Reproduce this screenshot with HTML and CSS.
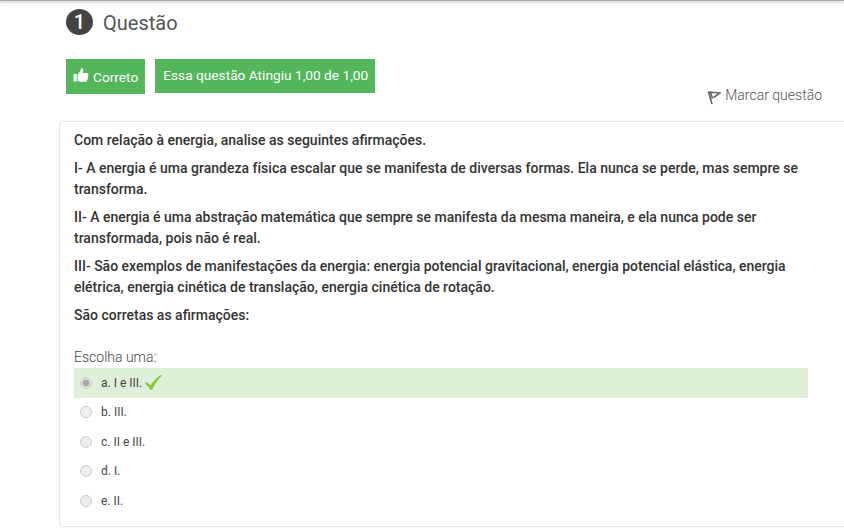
FILE: index.html
```html
<!DOCTYPE html>
<html>
    <head>
        <title>Questão</title>
        <meta charset="utf-8" />
        <link rel="stylesheet" href="styles.css">
    </head>
    <body>
        <div class="top-shadow"></div>
        <div class="question-head">
            <span class="number">1</span>
            <h2>Questão</h2>
        </div>
        <div class="status-row">
            <span class="tag tag-correct">
                <svg class="thumb" viewBox="0 0 16 16" width="16" height="16">
                    <path fill="#fff" d="M0.5 7h3.2v7.6H0.5zM4.600 7.200c1.500-1 2.600-2.600 3-4.400.2-1 .5-1.800 1.200-1.800 1 0 1.600 1 1.500 2.300-.1 1-.5 1.800-.8 2.600h4.400c1 0 1.600.6 1.600 1.400 0 .5-.2.900-.5 1.200.3.300.4.600.4 1 0 .6-.3 1-.8 1.300.2.300.2.600.2.900 0 .6-.4 1-.9 1.200.1.200.1.400.1.600 0 .8-.6 1.300-1.500 1.300H8c-1.300 0-2.300-.5-3.400-.9z"/>
                </svg>
                Correto
            </span>
            <span class="tag tag-grade">Essa questão Atingiu 1,00 de 1,00</span>
        </div>
        <div class="flag-row">
            <svg class="flag" viewBox="0 0 14 15" width="14" height="15">
                <path fill="none" stroke="#666" stroke-width="1.600" d="M1 2l12 1-6.500 4.500M1.500 2l3.500 12M3.500 2.500l2 6"/>
            </svg>
            <span>Marcar questão</span>
        </div>
        <div class="card">
            <p>Com relação à energia, analise as seguintes afirmações.</p>
            <p>I- A energia é uma grandeza física escalar que se manifesta de diversas formas. Ela nunca se perde, mas sempre se transforma.</p>
            <p>II- A energia é uma abstração matemática que sempre se manifesta da mesma maneira, e ela nunca pode ser transformada, pois não é real.</p>
            <p>III- São exemplos de manifestações da energia: energia potencial gravitacional, energia potencial elástica, energia elétrica, energia cinética de translação, energia cinética de rotação.</p>
            <p>São corretas as afirmações:</p>
            <div class="prompt">Escolha uma:</div>
            <div class="answers">
                <div class="answer answer-right">
                    <span class="radio radio-on"></span>
                    <span>a. I e III.</span>
                    <svg class="check" viewBox="0 0 17 15" width="17" height="15">
                        <path fill="#8cc63f" d="M0 8.500l2-1.500 3.500 3.500C8 6.500 11.500 3 15.500 0l1.500.5C12.500 5 9.500 9.500 7 15H5.500C4 12.500 2 10.500 0 8.500z"/>
                    </svg>
                </div>
                <div class="answer"><span class="radio"></span><span>b. III.</span></div>
                <div class="answer"><span class="radio"></span><span>c. II e III.</span></div>
                <div class="answer"><span class="radio"></span><span>d. I.</span></div>
                <div class="answer"><span class="radio"></span><span>e. II.</span></div>
            </div>
        </div>
    </body>
</html>
```

FILE: styles.css
```css
html,
body {
    margin: 0;
    padding: 0;
    height: 528px;
    overflow: hidden;
    background-color: #fff;
    font-family: Roboto, 'Liberation Sans', sans-serif;
    color: #333;
}

.top-shadow {
    height: 1px;
    background-color: #aaa;
    box-shadow: 0 1px 3px rgba(0, 0, 0, 0.4);
}

.question-head {
    display: flex;
    align-items: center;
    gap: 10px;
    height: 27px;
    margin: 7px 0 0 66px;
}

.question-head h2 {
    margin: 2px 0 0;
    font-size: 20px;
    font-weight: 400;
    color: #555;
}

.number {
    width: 27px;
    height: 26px;
    border-radius: 50%;
    background-color: #444;
    color: #fff;
    font-size: 20px;
    font-weight: 500;
    line-height: 26px;
    text-align: center;
}

.status-row {
    display: flex;
    align-items: flex-start;
    gap: 10px;
    margin: 24px 0 0 66px;
}

.tag {
    display: flex;
    align-items: center;
    background-color: #53b65a;
    color: #fff;
    font-size: 13.700px;
}

.tag-correct {
    height: 35px;
    padding: 0 7px;
    gap: 4px;
}

.tag-grade {
    height: 34px;
    padding: 0 7px 2px 8px;
    box-sizing: border-box;
}

.thumb {
    margin-bottom: 3px;
}

.flag-row {
    display: flex;
    align-items: center;
    justify-content: flex-end;
    gap: 4px;
    height: 18px;
    margin: -8px 22px 0 0;
    font-size: 14px;
    font-weight: 300;
    color: #555;
}

.flag {
    margin-top: 4px;
}

.card {
    box-sizing: border-box;
    height: 406px;
    margin: 17px -10px 0 59px;
    padding: 8px 45px 0 14px;
    border: 1px solid #e8e8e8;
    border-radius: 4px;
}

.card p {
    margin: 0 0 7px;
    font-size: 14px;
    font-weight: 500;
    line-height: 21px;
    color: #333;
}

.prompt {
    margin-top: 21px;
    font-size: 14px;
    font-weight: 300;
    line-height: 20px;
    color: #444;
}

.answers {
    margin-top: 1px;
}

.answer {
    display: flex;
    align-items: center;
    height: 29.500px;
    padding-left: 6px;
    font-size: 12px;
    color: #444;
}

.answer-right {
    background-color: #dff0d8;
}

.radio {
    box-sizing: border-box;
    width: 12px;
    height: 12px;
    margin-right: 9px;
    border: 1px solid #ccc;
    border-radius: 50%;
    background-color: #eee;
}

.radio-on {
    background: radial-gradient(circle, #aaa 0 3px, #e4e4e4 4px);
}

.check {
    margin-left: 3px;
}
```
